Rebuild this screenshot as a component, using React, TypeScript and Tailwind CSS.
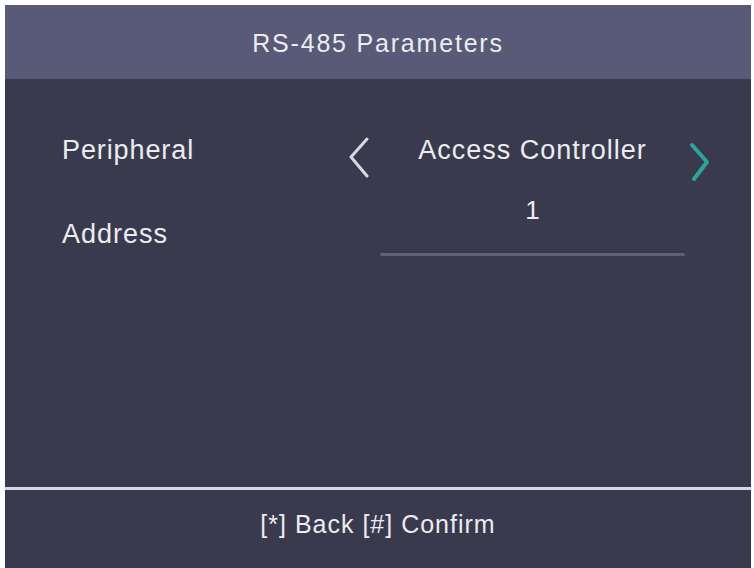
import React from "react";

export default function App() {
  const font = { fontFamily: '"Liberation Sans", Arial, sans-serif' };
  return (
    <div className="w-[754px] h-[568px] bg-white pl-[5px] pt-[5px] pr-[3px]" style={font}>
      <div className="flex flex-col h-full bg-[#3a3a4f] text-[#ececf0]">
        <div className="h-[74px] shrink-0 bg-[#585a78] flex items-center justify-center">
          <span className="text-[25px] tracking-[1.8px] leading-[30px] mt-[2px]">RS-485 Parameters</span>
        </div>
        <div className="flex-1 flex">
          <div className="w-[343px] pl-[57px] pt-[56px] flex flex-col">
            <span className="text-[27px] leading-[30px] tracking-[0.9px]">Peripheral</span>
            <span className="mt-[54px] text-[27px] leading-[30px] tracking-[1px]">Address</span>
          </div>
          <div className="flex flex-col pt-[56px]">
            <div className="flex items-start">
              <svg width="32" height="44" viewBox="0 0 32 44" className="mt-[2px]">
                <path d="M19 2 L3 20 L19 39" fill="none" stroke="#d8d8e0" strokeWidth="3" strokeLinecap="round" strokeLinejoin="round" />
              </svg>
              <div className="w-[305px] text-center text-[27px] leading-[30px] tracking-[1px]">Access Controller</div>
              <svg width="32" height="44" viewBox="0 0 32 44" className="mt-[6px]">
                <path d="M7 4 L22 21 L9 38" fill="none" stroke="#2ba59b" strokeWidth="4" strokeLinecap="round" strokeLinejoin="round" />
              </svg>
            </div>
            <div className="ml-[32px] w-[305px] text-center text-[26px] leading-[30px] mt-[10px]">1</div>
            <div className="ml-[32px] w-[305px] h-[3px] bg-[#5e6078] mt-[28px] rounded-full" />
          </div>
        </div>
        <div className="h-[3px] bg-[#d6d6e4] shrink-0" />
        <div className="h-[78px] shrink-0 flex items-center justify-center pb-[10px]">
          <span className="text-[25px] leading-[30px] tracking-[1px]">[*] Back [#] Confirm</span>
        </div>
      </div>
    </div>
  );
}
